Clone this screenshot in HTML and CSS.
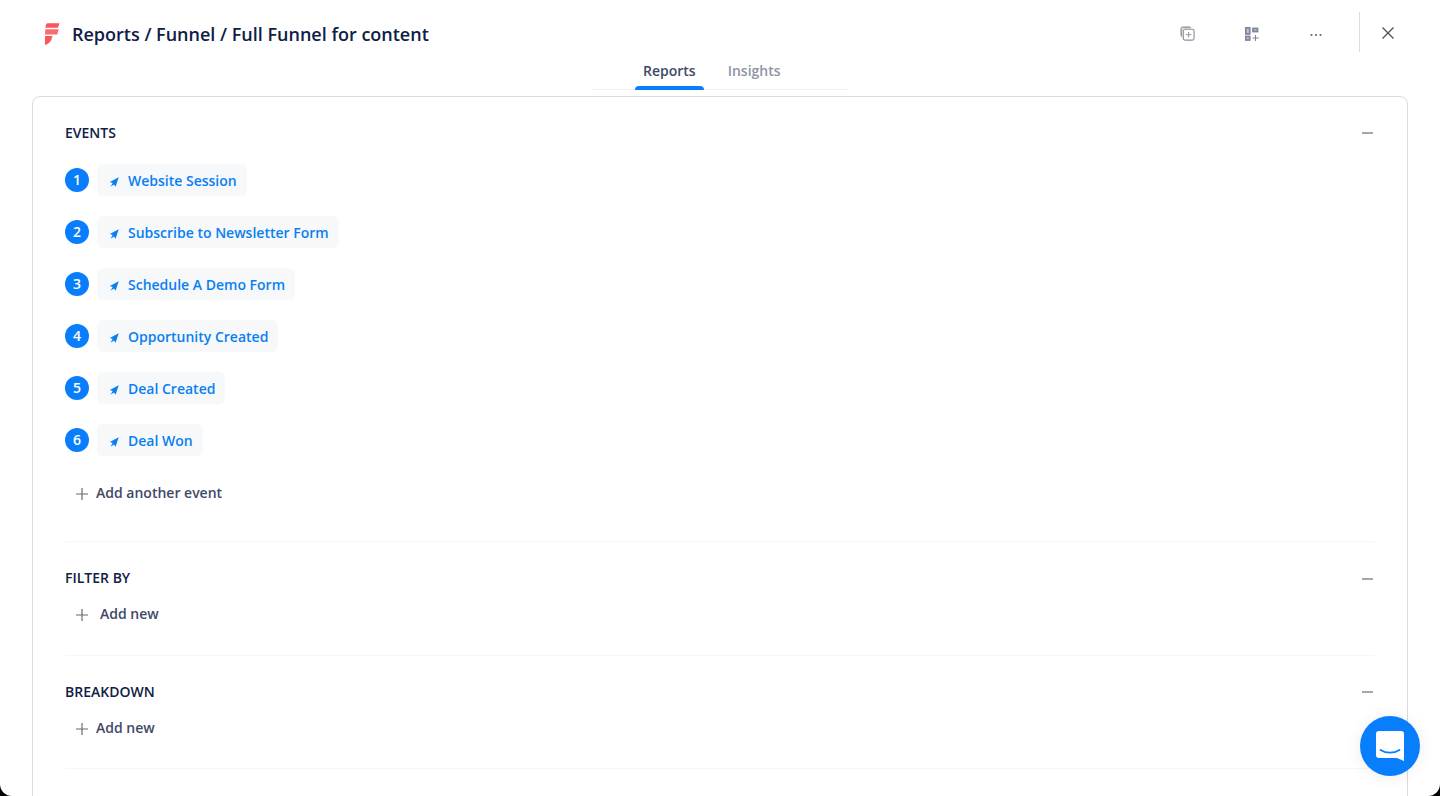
FILE: index.html
```html
<!DOCTYPE html>
<html lang="en">
<head>
<meta charset="utf-8">
<title>Full Funnel for content</title>
<link rel="stylesheet" href="styles.css">
</head>
<body>
<div class="modal">
  <header class="topbar">
    <div class="crumbs">
      <svg class="logo" width="16" height="24" viewBox="0 0 16 24"><path d="M3.2 1.2H15.4L14 5.800H1.400C1.600 3.300 2 1.900 3.200 1.200Z" fill="#f9565e"/><path d="M1.300 7.200H14.600L13.400 12.600H1Z" fill="#fb6a6f"/><path d="M1 14H8.500L7.400 17.600C6.600 20 4.400 22 1 23.200Z" fill="#f9565e"/></svg>
      <h1 class="title">Reports / Funnel / Full Funnel for content</h1>
    </div>
    <div class="actions">
      <button class="icon-btn" aria-label="Copy"><svg width="15" height="15" viewBox="0 0 16 16" fill="none" stroke="#8a8f9c" stroke-width="1"><path d="M2.500 11.500C1.400 11.500 1 11 1 10V3C1 1.800 1.600 1 3 1H10C11 1 11.500 1.500 11.500 2.500"/><path d="M1.800 10.500V3.500C1.800 2.500 2.500 1.800 3.500 1.800H10.500"/><rect x="3.500" y="3.500" width="11.500" height="11.500" rx="2" stroke-width="1.200"/><path d="M9.200 6.300V12.200M6.300 9.200H12.200"/></svg></button>
      <button class="icon-btn grid-btn" aria-label="Add widget"><svg width="14" height="14" viewBox="0 0 14 14" fill="#c6c9d1" stroke="#80869a" stroke-width="1.800"><rect x=".9" y=".9" width="3.800" height="6"/><rect x="8" y="1.500" width="4.500" height="3"/><rect x=".9" y="9.500" width="3.800" height="3.500"/><path d="M10.500 8V14M7.500 11H13.800" fill="none" stroke-width="1.100"/></svg></button>
      <button class="icon-btn dots-btn" aria-label="More"><svg width="12" height="12" viewBox="0 0 12 12" fill="#5f6470"><circle cx="1.500" cy="6" r="1.100"/><circle cx="6" cy="6" r="1.100"/><circle cx="10.500" cy="6" r="1.100"/></svg></button>
      <span class="divider"></span>
      <button class="icon-btn close" aria-label="Close"><svg width="14" height="14" viewBox="0 0 14 14" fill="none" stroke="#50555f" stroke-width="1.400"><path d="M1.500 1.500L12.500 12.500M12.500 1.500L1.500 12.500"/></svg></button>
    </div>
  </header>
  <nav class="tabs">
    <span class="tab active">Reports</span>
    <span class="tab">Insights</span>
  </nav>
  <main class="card">
    <section class="section events">
      <div class="section-head"><h2>EVENTS</h2><span class="minus"></span></div>
      <ol class="event-list">
        <li class="event"><span class="num">1</span><span class="chip"><svg class="arrow" viewBox="0 0 10 10"><path d="M9.700 .3L.8 4.900 3.700 5.900 1.500 9.700 5 7.500 6.600 9.700Z"/></svg>Website Session</span></li>
        <li class="event"><span class="num">2</span><span class="chip"><svg class="arrow" viewBox="0 0 10 10"><path d="M9.700 .3L.8 4.900 3.700 5.900 1.500 9.700 5 7.500 6.600 9.700Z"/></svg>Subscribe to Newsletter Form</span></li>
        <li class="event"><span class="num">3</span><span class="chip"><svg class="arrow" viewBox="0 0 10 10"><path d="M9.700 .3L.8 4.900 3.700 5.900 1.500 9.700 5 7.500 6.600 9.700Z"/></svg>Schedule A Demo Form</span></li>
        <li class="event"><span class="num">4</span><span class="chip"><svg class="arrow" viewBox="0 0 10 10"><path d="M9.700 .3L.8 4.900 3.700 5.900 1.500 9.700 5 7.500 6.600 9.700Z"/></svg>Opportunity Created</span></li>
        <li class="event"><span class="num">5</span><span class="chip"><svg class="arrow" viewBox="0 0 10 10"><path d="M9.700 .3L.8 4.900 3.700 5.900 1.500 9.700 5 7.500 6.600 9.700Z"/></svg>Deal Created</span></li>
        <li class="event"><span class="num">6</span><span class="chip"><svg class="arrow" viewBox="0 0 10 10"><path d="M9.700 .3L.8 4.900 3.700 5.900 1.500 9.700 5 7.500 6.600 9.700Z"/></svg>Deal Won</span></li>
      </ol>
      <div class="add add-event"><svg class="plus" viewBox="0 0 12 12"><path d="M6 0V12M0 6H12"/></svg>Add another event</div>
    </section>
    <section class="section filter">
      <div class="section-head"><h2>FILTER BY</h2><span class="minus"></span></div>
      <div class="add wide"><svg class="plus" viewBox="0 0 12 12"><path d="M6 0V12M0 6H12"/></svg>Add new</div>
    </section>
    <section class="section breakdown">
      <div class="section-head"><h2>BREAKDOWN</h2><span class="minus"></span></div>
      <div class="add"><svg class="plus" viewBox="0 0 12 12"><path d="M6 0V12M0 6H12"/></svg>Add new</div>
    </section>
  </main>
  <button class="chat" aria-label="Chat"><svg width="28" height="32" viewBox="1 0 28 32"><path d="M4 1H26C28 1 29 2.200 29 4V31L22 28H4C2 28 1 26.800 1 25V4C1 2.200 2 1 4 1Z" fill="#fff"/><path d="M5.500 20C11 23.600 19 23.600 24.500 20" fill="none" stroke="#087efc" stroke-width="1.800" stroke-linecap="round"/></svg></button>
</div>
</body>
</html>
```
FILE: styles.css
```css
* { box-sizing: border-box; }
html, body { margin: 0; padding: 0; height: 100%; background: #000; overflow: hidden; }
body { font-family: "Open Sans", "Liberation Sans", sans-serif; }
.modal {
  position: relative;
  width: 1440px;
  height: 796px;
  background: #fff;
  border-radius: 0 0 12px 12px;
  overflow: hidden;
  display: flex;
  flex-direction: column;
}
.topbar {
  height: 52px;
  margin-top: 12px;
  padding: 0 44px;
  display: flex;
  align-items: center;
  justify-content: space-between;
  flex: none;
}
.crumbs { display: flex; align-items: center; gap: 12px; margin-top: -8px; }
.logo { display: block; }
.title { margin: 0; font-size: 18px; font-weight: 600; line-height: 28px; color: #0e2045; }
.actions { display: flex; align-items: center; height: 40px; margin-top: -12px; margin-right: -20px; }
.icon-btn { border: 0; background: none; padding: 3px 0 0; width: 64px; height: 32px; display: flex; align-items: center; justify-content: center; }
.icon-btn svg { display: block; }
.grid-btn { padding: 4px 0 0 2px; }
.dots-btn { padding: 5px 0 0 2px; }
.divider { width: 1px; height: 40px; background: #dcdde0; margin-left: 12px; }
.close { width: 56px; padding-top: 2px; }
.tabs {
  flex: none;
  width: 256px;
  height: 27px;
  margin: -1px auto 0;
  padding-left: 43px;
  display: flex;
  gap: 16px;
  border-bottom: 1px solid #f1f2f4;
}
.tab {
  position: relative;
  padding: 0 8px;
  height: 26px;
  font-size: 14px;
  font-weight: 600;
  line-height: 15px;
  color: #8e94a3;
}
.tab.active { color: #3e4a66; }
.tab.active::after {
  content: "";
  position: absolute;
  left: 0; right: 0; bottom: -1px;
  height: 4px;
  border-radius: 4px 4px 0 0;
  background: #087efc;
}
.card {
  flex: none;
  margin: 6px 32px 0;
  height: 720px;
  border: 1px solid #d9dadc;
  border-radius: 8px;
  padding: 24px 32px 0;
}
.section { border-bottom: 1px solid #f5f6f8; }
.section-head { display: flex; align-items: center; justify-content: space-between; height: 24px; margin-bottom: 11px; }
.section-head h2 { margin: 0; font-size: 14px; font-weight: 600; line-height: 24px; color: #0e2045; }
.minus { width: 11px; height: 2px; background: #a3a6ad; margin-right: 2px; }
.filter .minus { margin-top: 2px; }
.events .section-head { margin-bottom: 19px; }
.event-list { list-style: none; margin: 0; padding: 0; }
.event { display: flex; align-items: center; gap: 8px; height: 32px; margin-bottom: 20px; }
.num {
  width: 24px; height: 24px; border-radius: 50%;
  background: #087efc; color: #fff;
  font-size: 14px; font-weight: 600; line-height: 24px; text-align: center;
}
.chip {
  display: flex; align-items: center;
  height: 32px;
  padding: 0 10px 0 12px;
  border-radius: 6px;
  background: #f6f8fa;
  color: #0a7ff2;
  font-size: 14px; font-weight: 600; white-space: nowrap;
}
.arrow { width: 10px; height: 10px; margin-right: 9px; margin-top: 3px; fill: #0a7ff2; }
.add { display: flex; align-items: center; height: 24px; padding-left: 11px; color: #3e4a66; font-size: 14px; font-weight: 600; }
.plus { width: 12px; height: 12px; margin-right: 8px; margin-top: 4px; fill: none; stroke: #666b75; stroke-width: 1.200; }
.wide .plus { margin-right: 12px; }
.add-event { margin-top: 24px; }
.events { height: 421px; }
.filter { height: 114px; padding-top: 24px; }
.breakdown { height: 113px; padding-top: 24px; }
.chat {
  position: absolute;
  right: 20px; bottom: 20px;
  width: 60px; height: 60px;
  border: 0; padding: 0; border-radius: 50%;
  background: #087efc;
  box-shadow: 0 1px 16px rgba(0,0,0,.08);
  display: flex; align-items: center; justify-content: center;
}
```
